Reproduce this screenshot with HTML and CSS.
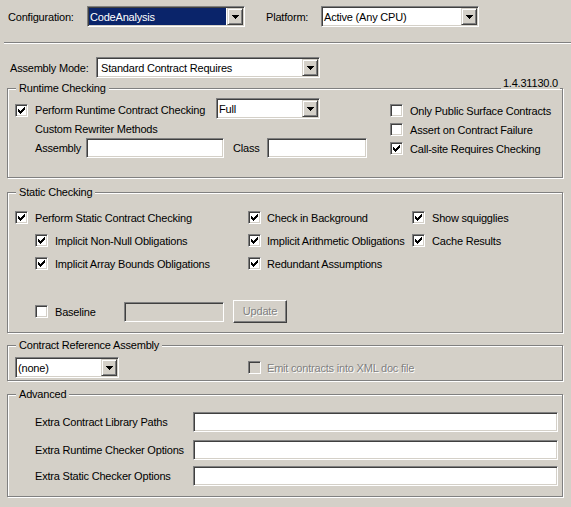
FILE: index.html
```html
<!DOCTYPE html>
<html>
<head>
<meta charset="utf-8">
<title>Code Contracts</title>
<link rel="stylesheet" href="styles.css">
</head>
<body>
<div class="page">
  <div class="toprow">
    <span class="lbl cfg-lbl">Configuration:</span>
    <div class="combo combo-cfg"><span class="val sel">CodeAnalysis</span><span class="ddbtn"><svg width="7" height="4" viewBox="0 0 7 4"><path d="M0 0h7v1H0zM1 1h5v1H1zM2 2h3v1H2zM3 3h1v1H3z"/></svg></span></div>
    <span class="lbl plat-lbl">Platform:</span>
    <div class="combo combo-plat"><span class="val">Active (Any CPU)</span><span class="ddbtn"><svg width="7" height="4" viewBox="0 0 7 4"><path d="M0 0h7v1H0zM1 1h5v1H1zM2 2h3v1H2zM3 3h1v1H3z"/></svg></span></div>
  </div>
  <div class="sep"></div>
  <div class="asmrow">
    <span class="lbl asm-lbl">Assembly Mode:</span>
    <div class="combo combo-asm"><span class="val pad3">Standard Contract Requires</span><span class="ddbtn"><svg width="7" height="4" viewBox="0 0 7 4"><path d="M0 0h7v1H0zM1 1h5v1H1zM2 2h3v1H2zM3 3h1v1H3z"/></svg></span></div>
  </div>

  <div class="group g-runtime">
    <span class="legend">Runtime Checking</span>
    <span class="version">1.4.31130.0</span>
    <div class="rt-left">
      <div class="rowA">
        <div class="chk w-rtc"><span class="cb"><svg class="ck" width="11" height="11" viewBox="1 1 11 11"><path d="M9 3h1v1H9zM8 4h2v1H8zM3 5h1v1H3zM7 5h3v1H7zM3 6h2v1H3zM6 6h3v1H6zM3 7h5v1H3zM4 8h3v1H4zM5 9h1v1H5z"/></svg></span><span>Perform Runtime Contract Checking</span></div>
        <div class="combo combo-full"><span class="val">Full</span><span class="ddbtn"><svg width="7" height="4" viewBox="0 0 7 4"><path d="M0 0h7v1H0zM1 1h5v1H1zM2 2h3v1H2zM3 3h1v1H3z"/></svg></span></div>
      </div>
      <div class="rowB">Custom Rewriter Methods</div>
      <div class="rowC">
        <span class="lbl rc-asm">Assembly</span>
        <span class="tb tb-asm"></span>
        <span class="lbl rc-class">Class</span>
        <span class="tb tb-class"></span>
      </div>
    </div>
    <div class="rt-right">
      <div class="chk rrow"><span class="cb"></span><span>Only Public Surface Contracts</span></div>
      <div class="chk rrow"><span class="cb"></span><span>Assert on Contract Failure</span></div>
      <div class="chk rrow"><span class="cb"><svg class="ck" width="11" height="11" viewBox="1 1 11 11"><path d="M9 3h1v1H9zM8 4h2v1H8zM3 5h1v1H3zM7 5h3v1H7zM3 6h2v1H3zM6 6h3v1H6zM3 7h5v1H3zM4 8h3v1H4zM5 9h1v1H5z"/></svg></span><span>Call-site Requires Checking</span></div>
    </div>
  </div>

  <div class="group g-static">
    <span class="legend">Static Checking</span>
    <div class="sgrid">
      <div class="chk"><span class="cb"><svg class="ck" width="11" height="11" viewBox="1 1 11 11"><path d="M9 3h1v1H9zM8 4h2v1H8zM3 5h1v1H3zM7 5h3v1H7zM3 6h2v1H3zM6 6h3v1H6zM3 7h5v1H3zM4 8h3v1H4zM5 9h1v1H5z"/></svg></span><span>Perform Static Contract Checking</span></div>
      <div class="chk mid"><span class="cb"><svg class="ck" width="11" height="11" viewBox="1 1 11 11"><path d="M9 3h1v1H9zM8 4h2v1H8zM3 5h1v1H3zM7 5h3v1H7zM3 6h2v1H3zM6 6h3v1H6zM3 7h5v1H3zM4 8h3v1H4zM5 9h1v1H5z"/></svg></span><span>Check in Background</span></div>
      <div class="chk"><span class="cb"><svg class="ck" width="11" height="11" viewBox="1 1 11 11"><path d="M9 3h1v1H9zM8 4h2v1H8zM3 5h1v1H3zM7 5h3v1H7zM3 6h2v1H3zM6 6h3v1H6zM3 7h5v1H3zM4 8h3v1H4zM5 9h1v1H5z"/></svg></span><span>Show squigglies</span></div>

      <div class="chk ind"><span class="cb"><svg class="ck" width="11" height="11" viewBox="1 1 11 11"><path d="M9 3h1v1H9zM8 4h2v1H8zM3 5h1v1H3zM7 5h3v1H7zM3 6h2v1H3zM6 6h3v1H6zM3 7h5v1H3zM4 8h3v1H4zM5 9h1v1H5z"/></svg></span><span>Implicit Non-Null Obligations</span></div>
      <div class="chk mid"><span class="cb"><svg class="ck" width="11" height="11" viewBox="1 1 11 11"><path d="M9 3h1v1H9zM8 4h2v1H8zM3 5h1v1H3zM7 5h3v1H7zM3 6h2v1H3zM6 6h3v1H6zM3 7h5v1H3zM4 8h3v1H4zM5 9h1v1H5z"/></svg></span><span>Implicit Arithmetic Obligations</span></div>
      <div class="chk"><span class="cb"><svg class="ck" width="11" height="11" viewBox="1 1 11 11"><path d="M9 3h1v1H9zM8 4h2v1H8zM3 5h1v1H3zM7 5h3v1H7zM3 6h2v1H3zM6 6h3v1H6zM3 7h5v1H3zM4 8h3v1H4zM5 9h1v1H5z"/></svg></span><span>Cache Results</span></div>

      <div class="chk ind"><span class="cb"><svg class="ck" width="11" height="11" viewBox="1 1 11 11"><path d="M9 3h1v1H9zM8 4h2v1H8zM3 5h1v1H3zM7 5h3v1H7zM3 6h2v1H3zM6 6h3v1H6zM3 7h5v1H3zM4 8h3v1H4zM5 9h1v1H5z"/></svg></span><span>Implicit Array Bounds Obligations</span></div>
      <div class="chk mid"><span class="cb"><svg class="ck" width="11" height="11" viewBox="1 1 11 11"><path d="M9 3h1v1H9zM8 4h2v1H8zM3 5h1v1H3zM7 5h3v1H7zM3 6h2v1H3zM6 6h3v1H6zM3 7h5v1H3zM4 8h3v1H4zM5 9h1v1H5z"/></svg></span><span>Redundant Assumptions</span></div>
      <div></div>
    </div>
    <div class="blrow">
      <div class="chk"><span class="cb"></span><span class="bl-lbl">Baseline</span></div>
      <span class="tb tb-bl dis"></span>
      <span class="btn"><span class="distext">Update</span></span>
    </div>
  </div>

  <div class="group g-contract">
    <span class="legend">Contract Reference Assembly</span>
    <div class="crrow">
      <div class="combo combo-none"><span class="val">(none)</span><span class="ddbtn"><svg width="7" height="4" viewBox="0 0 7 4"><path d="M0 0h7v1H0zM1 1h5v1H1zM2 2h3v1H2zM3 3h1v1H3z"/></svg></span></div>
      <div class="chk emit"><span class="cb dis"></span><span class="distext">Emit contracts into XML doc file</span></div>
    </div>
  </div>

  <div class="group g-adv">
    <span class="legend">Advanced</span>
    <div class="advrow"><span class="lbl adv-lbl">Extra Contract Library Paths</span><span class="tb tb-adv"></span></div>
    <div class="advrow r2"><span class="lbl adv-lbl">Extra Runtime Checker Options</span><span class="tb tb-adv"></span></div>
    <div class="advrow r3"><span class="lbl adv-lbl">Extra Static Checker Options</span><span class="tb tb-adv"></span></div>
  </div>
</div>
</body>
</html>
```

FILE: styles.css
```css
html, body {
  margin: 0;
  padding: 0;
}
body {
  background: #d4d0c8;
  font-family: "Liberation Sans", Arial, sans-serif;
  font-size: 11px;
  line-height: 13px;
  letter-spacing: -0.2px;
  color: #000;
  width: 571px;
  height: 507px;
  overflow: hidden;
}
.page {
  padding-top: 6px;
}
.lbl {
  white-space: nowrap;
  flex: none;
}

/* top row */
.toprow {
  display: flex;
  align-items: center;
  height: 21px;
  padding-left: 8px;
}
.cfg-lbl { width: 79px; padding-top: 1px; }
.plat-lbl { width: 55px; margin-left: 21px; padding-top: 1px; }

/* combo box */
.combo {
  box-sizing: border-box;
  height: 21px;
  display: flex;
  flex: none;
  padding: 1px;
  border: 1px solid;
  border-color: #808080 #fff #fff #808080;
  box-shadow: inset 1px 1px #404040, inset -1px -1px #d4d0c8;
  background: #fff;
}
.combo .val {
  flex: 1;
  display: flex;
  align-items: center;
  padding-left: 1px;
  padding-top: 1px;
  white-space: nowrap;
  overflow: hidden;
}
.combo .val.pad3 { padding-left: 3px; }
.combo .val.sel {
  background: #0a246a;
  color: #fff;
  margin-right: 1px;
}
.ddbtn {
  box-sizing: border-box;
  width: 16px;
  flex: none;
  display: flex;
  align-items: center;
  justify-content: center;
  background: #d4d0c8;
  border: 1px solid;
  border-color: #d4d0c8 #404040 #404040 #d4d0c8;
  box-shadow: inset 1px 1px #fff, inset -1px -1px #808080;
}
.ddbtn svg { display: block; fill: #000; }
.combo-cfg { width: 158px; }
.combo-plat { width: 158px; }
.combo-asm { width: 224px; }
.combo-full { width: 104px; }
.combo-none { width: 104px; }

/* separator */
.sep {
  box-sizing: border-box;
  height: 2px;
  margin: 15px 0 0 4px;
  border-top: 1px solid #808080;
  border-bottom: 1px solid #fff;
}

.asmrow {
  display: flex;
  align-items: center;
  height: 21px;
  margin-top: 13px;
  padding-left: 10px;
}
.asm-lbl { width: 86px; padding-top: 1px; }

/* group boxes */
.group {
  position: relative;
  box-sizing: border-box;
  width: 556px;
  margin: 10px 0 0 7px;
  border: 1px solid #808080;
  box-shadow: 1px 1px #fff, inset 1px 1px #fff;
}
.legend {
  position: absolute;
  top: -7px;
  left: 8px;
  padding: 0 3px;
  line-height: 13px;
  background: #d4d0c8;
  white-space: nowrap;
}
.version {
  position: absolute;
  top: -12px;
  right: 2px;
  padding: 0 2px;
  line-height: 12px;
  background: #d4d0c8;
}

/* checkbox */
.chk {
  display: flex;
  align-items: center;
  gap: 7px;
  white-space: nowrap;
}
.chk > span:last-child { padding-top: 1px; }
.cb {
  box-sizing: border-box;
  display: block;
  flex: none;
  width: 13px;
  height: 13px;
  border: 1px solid;
  border-color: #808080 #fff #fff #808080;
  box-shadow: inset 1px 1px #404040, inset -1px -1px #d4d0c8;
  background: #fff;
}
.cb.dis { background: #d4d0c8; }
.ck { display: block; fill: #000; }

/* text box */
.tb {
  box-sizing: border-box;
  display: block;
  flex: none;
  height: 20px;
  border: 1px solid;
  border-color: #808080 #fff #fff #808080;
  box-shadow: inset 1px 1px #404040, inset -1px -1px #d4d0c8;
  background: #fff;
}
.tb.dis { background: #d4d0c8; }

.btn {
  box-sizing: border-box;
  display: flex;
  flex: none;
  align-items: center;
  justify-content: center;
  width: 54px;
  height: 23px;
  border: 1px solid;
  border-color: #fff #404040 #404040 #fff;
  box-shadow: inset -1px -1px #808080;
  background: #d4d0c8;
}
.distext {
  color: #808080;
  text-shadow: 1px 1px 0 #fff;
}

/* runtime */
.g-runtime {
  display: flex;
  height: 90px;
  padding: 9px 0 0 7px;
}
.rt-left { width: 375px; flex: none; }
.rt-right { padding-top: 3px; }
.rowA {
  display: flex;
  align-items: center;
  height: 21px;
}
.w-rtc { width: 201px; margin-top: 3px; }
.rowB {
  height: 19px;
  display: flex;
  align-items: center;
  padding-left: 20px;
  padding-top: 1px;
  box-sizing: border-box;
}
.rowC {
  display: flex;
  align-items: center;
  height: 20px;
}
.rc-asm { width: 51px; padding-left: 20px; padding-top: 1px; }
.tb-asm { width: 138px; }
.rc-class { width: 34px; margin-left: 9px; padding-top: 1px; }
.tb-class { width: 100px; }
.rrow { height: 19px; }

/* static */
.g-static {
  height: 141px;
  margin-top: 14px;
  padding: 13px 0 0 7px;
}
.sgrid {
  display: grid;
  grid-template-columns: 233px 164px 1fr;
  grid-auto-rows: 23px;
}
.sgrid .chk.mid { gap: 6px; }
.sgrid .chk.ind { padding-left: 20px; }
.blrow {
  display: flex;
  align-items: center;
  height: 23px;
  margin-top: 25px;
  padding-left: 20px;
}
.bl-lbl { width: 69px; }
.tb-bl { width: 100px; }
.btn { margin-left: 9px; }

/* contract reference */
.g-contract {
  height: 36px;
  margin-top: 12px;
  padding: 11px 0 0 7px;
}
.crrow {
  display: flex;
  align-items: center;
  height: 21px;
}
.emit { margin-left: 129px; gap: 6px; }

/* advanced */
.g-adv {
  height: 103px;
  margin-top: 13px;
  padding: 17px 0 0 27px;
}
.advrow {
  display: flex;
  align-items: center;
  height: 20px;
}
.advrow.r2 { margin-top: 8px; }
.advrow.r3 { margin-top: 6px; }
.adv-lbl { width: 158px; padding-top: 1px; }
.tb-adv { width: 365px; }
```
